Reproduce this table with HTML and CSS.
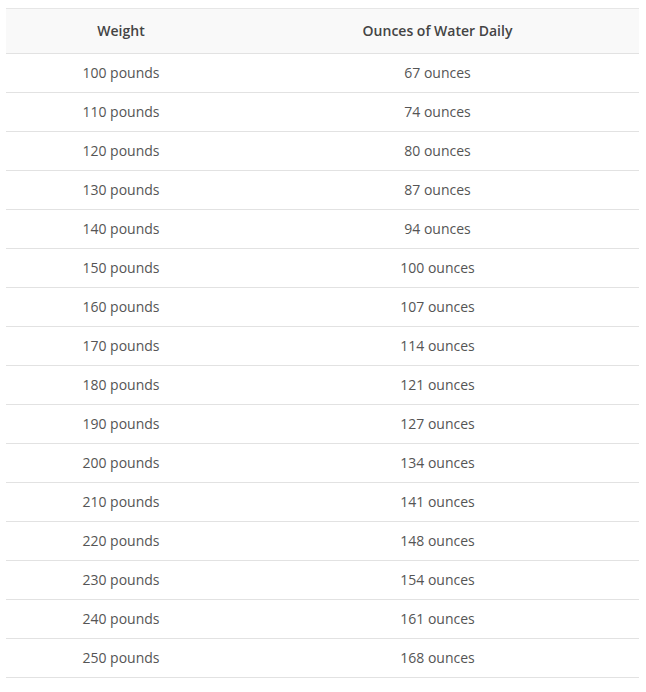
FILE: index.html
```html
<!DOCTYPE html>
<html>
<head>
<meta charset="utf-8">
<link rel="stylesheet" href="styles.css">
</head>
<body>
<table class="water">
<thead>
<tr><th class="c1">Weight</th><th>Ounces of Water Daily</th></tr>
</thead>
<tbody>
<tr><td>100 pounds</td><td>67 ounces</td></tr>
<tr><td>110 pounds</td><td>74 ounces</td></tr>
<tr><td>120 pounds</td><td>80 ounces</td></tr>
<tr><td>130 pounds</td><td>87 ounces</td></tr>
<tr><td>140 pounds</td><td>94 ounces</td></tr>
<tr><td>150 pounds</td><td>100 ounces</td></tr>
<tr><td>160 pounds</td><td>107 ounces</td></tr>
<tr><td>170 pounds</td><td>114 ounces</td></tr>
<tr><td>180 pounds</td><td>121 ounces</td></tr>
<tr><td>190 pounds</td><td>127 ounces</td></tr>
<tr><td>200 pounds</td><td>134 ounces</td></tr>
<tr><td>210 pounds</td><td>141 ounces</td></tr>
<tr><td>220 pounds</td><td>148 ounces</td></tr>
<tr><td>230 pounds</td><td>154 ounces</td></tr>
<tr><td>240 pounds</td><td>161 ounces</td></tr>
<tr><td>250 pounds</td><td>168 ounces</td></tr>
</tbody>
</table>
</body>
</html>
```
FILE: styles.css
```css
html, body {
  margin: 0;
  padding: 0;
  background: #fff;
}
body {
  padding: 8px 7px 0 6px;
  font-family: "Open Sans", "Liberation Sans", sans-serif;
  font-size: 14px;
  color: #555;
}
.water {
  width: 633px;
  border-collapse: collapse;
  table-layout: fixed;
}
.water thead tr {
  background: #f9f9f9;
  border-top: 1px solid #e6e6e6;
}
.water th {
  height: 43px;
  padding: 0 0 1px 0;
  font-weight: 600;
  color: #444;
  text-align: center;
  vertical-align: middle;
  border-bottom: 1px solid #e2e2e2;
}
.water th.c1 {
  width: 230px;
}
.water td {
  height: 37px;
  padding: 0 0 1px 0;
  text-align: center;
  vertical-align: middle;
  border-bottom: 1px solid #e2e2e2;
}
```
